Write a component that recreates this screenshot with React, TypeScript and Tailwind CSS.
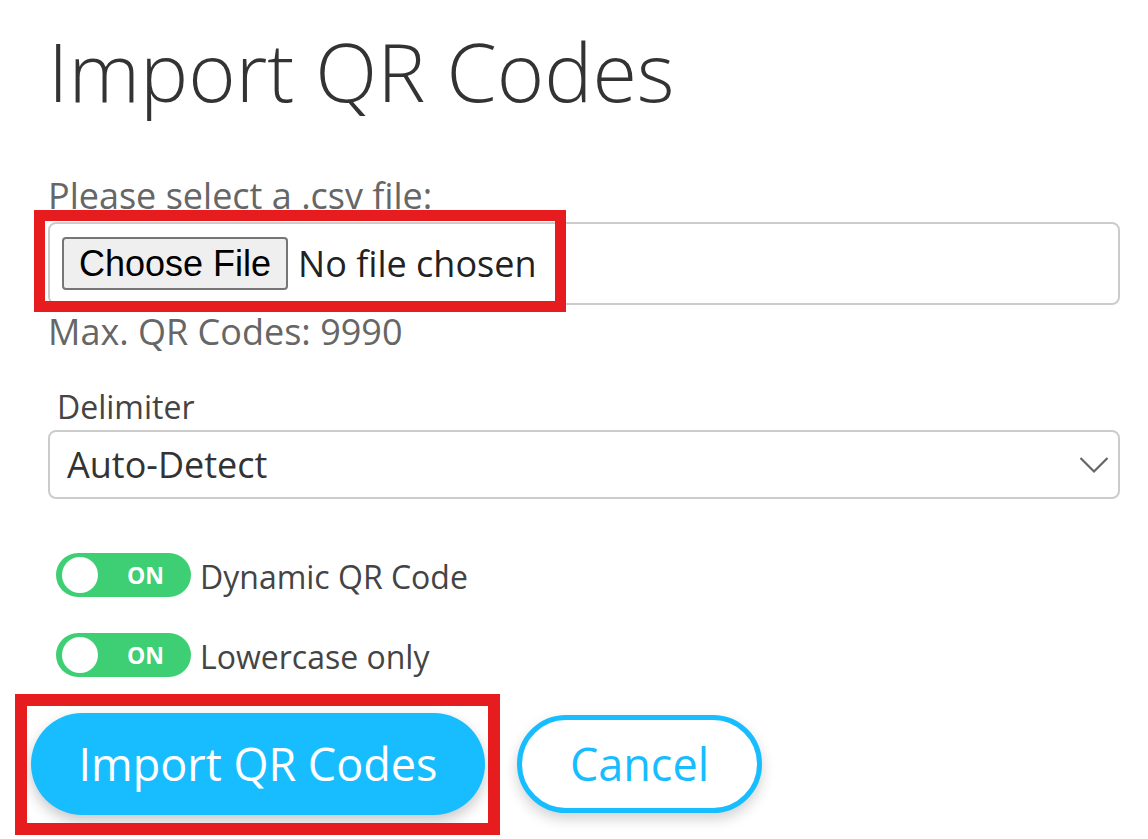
import React from "react";

function Toggle({ label }: { label: string }) {
  return (
    <div className="flex items-center">
      <div className="relative flex h-[44px] w-[135px] items-center rounded-full bg-[#3ecf74] pl-[6px]">
        <div className="h-[36px] w-[36px] rounded-full bg-white" />
        <span className="ml-[29px] text-[23px] font-bold leading-none text-white">ON</span>
      </div>
      <span className="ml-[9px] mt-[3px] text-[32px] leading-[40px] text-[#444]">{label}</span>
    </div>
  );
}

export default function App() {
  return (
    <div
      className="relative h-[839px] w-[1148px] overflow-hidden bg-white"
      style={{ fontFamily: '"Open Sans", sans-serif' }}
    >
      <div className="flex flex-col pl-[48px] pr-[28px] pt-[31px]">
        <h1 className="text-[81px] font-light leading-[80px] text-[#333]">Import QR Codes</h1>

        <div className="mt-[65px] text-[36px] leading-[40px] text-[#666]">Please select a .csv file:</div>
        <div className="mt-[6px] flex h-[83px] items-center rounded-[8px] border-2 border-[#ccc] pl-[12px]">
          <div
            className="flex h-[53px] items-center rounded-[4px] border-2 border-[#767676] bg-[#efefef] px-[15px] text-[36px] text-black"
            style={{ fontFamily: '"Liberation Sans", Arial, sans-serif' }}
          >
            Choose File
          </div>
          <span className="ml-[10px] text-[36px] text-[#222]">No file chosen</span>
        </div>
        <div className="mt-[7px] text-[36px] leading-[40px] text-[#666]">Max. QR Codes: 9990</div>

        <div className="mt-[37px] pl-[9px] text-[32px] leading-[36px] text-[#444]">Delimiter</div>
        <div className="mt-[5px] flex h-[69px] items-center justify-between rounded-[8px] border-2 border-[#ccc] pl-[17px] pr-[9px]">
          <span className="text-[36px] text-[#333]">Auto-Detect</span>
          <svg width="30" height="18" viewBox="0 0 30 18" fill="none">
            <path d="M1.5 2 L15 15.5 L28.5 2" stroke="#666" strokeWidth="2.2" />
          </svg>
        </div>

        <div className="mt-[54px] pl-[8px]">
          <Toggle label="Dynamic QR Code" />
        </div>
        <div className="mt-[36px] pl-[8px]">
          <Toggle label="Lowercase only" />
        </div>

        <div className="-ml-[17px] mt-[36px] flex items-center">
          <button className="flex h-[102px] w-[454px] items-center justify-center rounded-full bg-[#17bdff] text-[45px] text-white shadow-[0_6px_14px_rgba(0,0,0,0.22)]">
            Import QR Codes
          </button>
          <button className="ml-[32px] flex h-[98px] w-[245px] items-center justify-center rounded-full border-[5px] border-[#17bdff] bg-white text-[45px] text-[#17bdff] shadow-[0_6px_14px_rgba(0,0,0,0.18)]">
            Cancel
          </button>
        </div>
      </div>

      <div className="pointer-events-none absolute left-[34px] top-[210px] h-[102px] w-[532px] border-[11px] border-[#e61c1e]" />
      <div className="pointer-events-none absolute left-[15px] top-[694px] h-[141px] w-[485px] border-[12px] border-[#e61c1e]" />
    </div>
  );
}
